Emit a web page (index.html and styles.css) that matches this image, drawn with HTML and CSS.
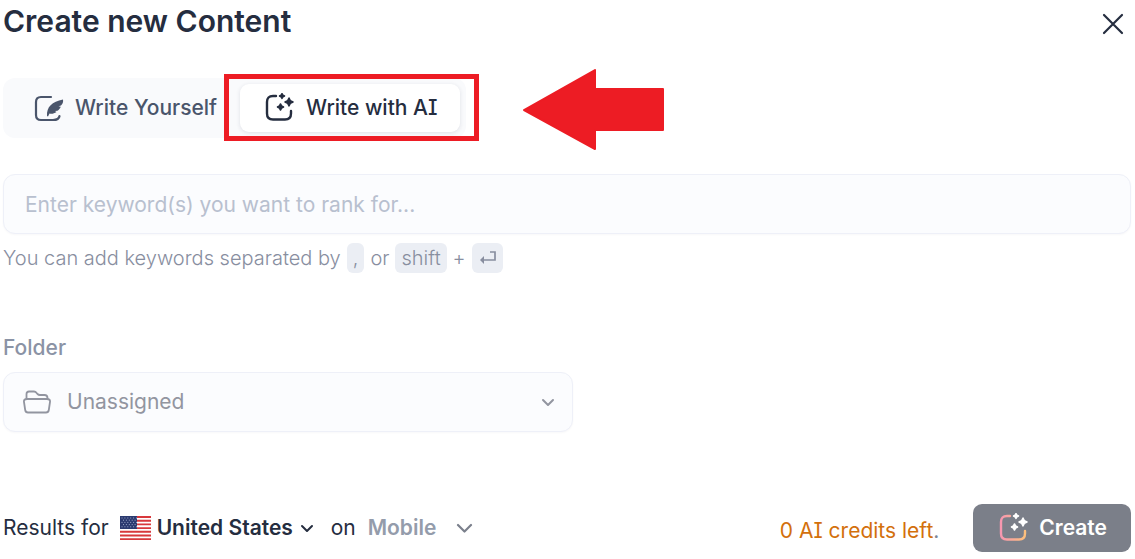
FILE: index.html
```html
<!DOCTYPE html>
<html lang="en">
<head>
    <meta charset="UTF-8">
    <meta name="viewport" content="width=device-width, initial-scale=1.0">
    <title>Create new Content</title>
    <link rel="stylesheet" href="styles.css">
</head>
<body>
    <main class="dialog">
        <header class="dialog-header">
            <h1>Create new Content</h1>
            <button type="button" class="close" aria-label="Close">
                <svg width="22" height="22" viewBox="0 0 22 22" fill="none" stroke="currentColor" stroke-width="2.200" stroke-linecap="round">
                    <path d="M2 2L20 20M20 2L2 20"/>
                </svg>
            </button>
        </header>

        <div class="tabs">
            <button type="button" class="tab">
                <svg width="30" height="30" viewBox="0 0 30 30" fill="none" stroke="currentColor" stroke-width="2.200" stroke-linecap="round">
                    <path d="M17 4H7Q2 4 2 9V22Q2 27 7 27H19Q25 27 25.500 23"/>
                    <path d="M13 23C12.500 14 18 8.500 29 6.500C29.500 9 28.500 11 27 12.500L24.500 13.200L26.800 13.800C26 15.500 25 16.800 23.500 17.800L21 18L22.500 19C20 20.800 17.500 21 15.500 20.500L14 23.500Z" fill="currentColor" stroke="none"/>
                </svg>
                Write Yourself
            </button>
            <button type="button" class="tab active">
                <svg width="30" height="30" viewBox="0 0 30 30" fill="none" stroke="currentColor" stroke-width="2.400" stroke-linecap="round">
                    <path d="M11 3H8Q2 3 2 9V20.500Q2 26.500 8 26.500H20Q26 26.500 26 20.500V18"/>
                    <path class="stars" d="M17 0.500L17.900 2.100L19.500 3L17.900 3.900L17 5.500L16.100 3.900L14.500 3L16.100 2.100ZM24 5L25.300 7.700L28 9L25.300 10.300L24 13L22.700 10.300L20 9L22.700 7.700ZM15.500 11L16.600 12.900L18.500 14L16.600 15.100L15.500 17L14.400 15.100L12.500 14L14.400 12.900Z"/>
                </svg>
                Write with AI
            </button>
            <div class="highlight"></div>
            <svg class="arrow" width="141" height="82" viewBox="0 0 141 82" fill="currentColor" stroke="currentColor" stroke-width="2" stroke-linejoin="round">
                <path d="M1 41L72 1V20H140V61H72V80Z"/>
            </svg>
        </div>

        <input type="text" class="field keyword" placeholder="Enter keyword(s) you want to rank for..." aria-label="Keywords">
        <p class="hint">
            You can add keywords separated by <kbd>,</kbd> or <kbd>shift</kbd> +
            <kbd class="enter">
                <svg width="17" height="14" viewBox="0 0 17 14" fill="none" stroke="currentColor" stroke-width="1.700">
                    <path d="M11 1H16V9H3"/>
                    <path d="M5 5L1 9L5 13Z" fill="currentColor" stroke="none"/>
                </svg>
            </kbd>
        </p>

        <label class="folder-label" for="folder">Folder</label>
        <div class="field folder">
            <svg width="28" height="24" viewBox="0 0 28 24" fill="none" stroke="currentColor" stroke-width="1.800" stroke-linejoin="round">
                <path d="M3.500 9V4Q3.500 1.500 6 1.500H11Q12.500 1.500 13.500 2.800L14.500 4Q15.500 5 17 5H21.500Q24.500 5 24.500 8V9"/>
                <path d="M4 9H24Q27.500 9 27 12L25.800 20Q25.400 22.500 23 22.500H5Q2.600 22.500 2.200 20L1 12Q0.500 9 4 9Z"/>
            </svg>
            <select id="folder">
                <option>Unassigned</option>
            </select>
            <svg class="chevron" width="14" height="10" viewBox="0 0 14 10" fill="none" stroke="currentColor" stroke-width="2" stroke-linecap="round" stroke-linejoin="round">
                <path d="M2 3L7 8L12 3"/>
            </svg>
        </div>

        <footer class="dialog-footer">
            <label for="country">Results for</label>
            <div class="country">
                <svg width="31" height="24" viewBox="0 0 31 24">
                    <rect width="31" height="24" fill="#fff"/>
                    <path d="M0 1H31M0 4.700H31M0 8.400H31M0 12.100H31M0 15.800H31M0 19.500H31M0 23.200H31" stroke="#d8383c" stroke-width="1.900"/>
                    <rect width="17" height="13" fill="#2b3a70"/>
                    <path d="M1.500 2H17M3 4.200H17M1.500 6.400H17M3 8.600H17M1.500 10.800H17" stroke="#a9b3d2" stroke-width="0.900" stroke-dasharray="1 1.900"/>
                </svg>
                <select id="country">
                    <option>United States</option>
                </select>
                <svg class="chevron" width="14" height="10" viewBox="0 0 14 10" fill="none" stroke="currentColor" stroke-width="2" stroke-linecap="round" stroke-linejoin="round">
                    <path d="M2 3L7 8L12 3"/>
                </svg>
            </div>
            <label for="device">on</label>
            <div class="device">
                <select id="device">
                    <option>Mobile</option>
                </select>
                <svg class="chevron" width="17" height="10" viewBox="0 0 17 10" fill="none" stroke="#7b808c" stroke-width="2.200" stroke-linecap="round" stroke-linejoin="round">
                    <path d="M2 2L8.500 8.500L15 2"/>
                </svg>
            </div>
            <p class="credits"><span>0 AI credits left</span>.</p>
            <button type="button" class="create">
                <svg width="30" height="30" viewBox="0 0 30 30" fill="none" stroke-width="2.400" stroke-linecap="round">
                    <defs>
                        <linearGradient id="glow" x1="0" y1="0" x2="1" y2="0">
                            <stop offset="0" stop-color="#f797b0"/>
                            <stop offset="1" stop-color="#fdc07c"/>
                        </linearGradient>
                    </defs>
                    <path stroke="url(#glow)" d="M11 3H8Q2 3 2 9V20.500Q2 26.500 8 26.500H20Q26 26.500 26 20.500V18"/>
                    <path class="stars" d="M17 0.500L17.900 2.100L19.500 3L17.900 3.900L17 5.500L16.100 3.900L14.500 3L16.100 2.100ZM24 5L25.300 7.700L28 9L25.300 10.300L24 13L22.700 10.300L20 9L22.700 7.700ZM15.500 11L16.600 12.900L18.500 14L16.600 15.100L15.500 17L14.400 15.100L12.500 14L14.400 12.900Z"/>
                </svg>
                Create
            </button>
        </footer>
    </main>
</body>
</html>
```
FILE: styles.css
```css
* {
    box-sizing: border-box;
}

body {
    margin: 0;
    background-color: #fff;
    color: #252d3f;
    font-family: Inter, "Liberation Sans", sans-serif;
    font-size: 21px;
    line-height: 30px;
    font-feature-settings: "cv08";
}

button,
input,
select {
    font: inherit;
    font-feature-settings: inherit;
    color: inherit;
}

button {
    border: none;
    cursor: pointer;
}

svg {
    flex-shrink: 0;
}

select {
    appearance: none;
    border: none;
    padding: 0;
    background: none;
}

.dialog {
    padding: 3px 4px 7px 3px;
}

.dialog-header {
    display: flex;
    justify-content: space-between;
    align-items: flex-start;
    height: 36px;
    margin-bottom: 39px;
}

h1 {
    margin: 0;
    font-size: 30px;
    font-weight: 600;
    line-height: 36px;
}

.close {
    display: flex;
    padding: 10px 7px;
    background: none;
}

.tabs {
    position: relative;
    display: flex;
    width: fit-content;
    padding: 6px;
    border-radius: 12px;
    background-color: #f9fafc;
}

.tab {
    display: flex;
    align-items: center;
    gap: 11px;
    height: 48px;
    padding: 0 23px 0 25px;
    border-radius: 9px;
    background: none;
    color: #4a556b;
    font-weight: 500;
    white-space: nowrap;
}

.tab.active {
    background-color: #fff;
    color: #252d3f;
    box-shadow: 0 1px 4px rgba(30, 40, 70, 0.12);
}

.stars {
    fill: currentColor;
    stroke: currentColor;
    stroke-width: 1.5;
    stroke-linejoin: round;
}

.highlight {
    position: absolute;
    top: -4px;
    right: -13px;
    width: 255px;
    height: 67px;
    border: 5px solid #ed1c24;
    pointer-events: none;
}

.arrow {
    position: absolute;
    top: -9px;
    left: 100%;
    margin-left: 57px;
    color: #ed1c24;
}

.field {
    width: 100%;
    height: 60px;
    border: 1px solid #eef0f8;
    border-radius: 12px;
    background-color: #fbfcfe;
    box-shadow: 0 1px 2px rgba(30, 40, 70, 0.03);
}

.keyword {
    display: block;
    margin-top: 36px;
    padding: 0 21px;
}

.keyword::placeholder {
    color: #b8c0cf;
    opacity: 1;
}

.hint {
    display: flex;
    align-items: center;
    gap: 6px;
    margin: 9px 0 60px;
    color: #888e9f;
    font-size: 20px;
    font-weight: 300;
}

kbd {
    height: 30px;
    padding: 0 6px;
    border-radius: 6px;
    background-color: #ebeef4;
    font: inherit;
}

.enter {
    display: flex;
    align-items: center;
    padding: 0 7px;
}

.folder-label {
    display: block;
    margin-bottom: 9px;
    color: #8b93a5;
    font-weight: 500;
}

.folder {
    display: flex;
    align-items: center;
    gap: 16px;
    max-width: 570px;
    padding: 0 17px 0 19px;
    color: #9295a0;
}

.folder select {
    flex: 1;
}

.dialog-footer {
    display: flex;
    align-items: center;
    height: 48px;
    margin-top: 72px;
    white-space: nowrap;
}

.country,
.device {
    display: flex;
    align-items: center;
    font-weight: 600;
}

.country {
    gap: 6px;
    margin: 0 17px 0 11px;
}

.device {
    gap: 19px;
    margin-left: 12px;
    color: #949cab;
}

.credits {
    margin: 0 34px 0 auto;
    padding-top: 6px;
    color: #7d8698;
}

.credits span {
    color: #d3700c;
}

.create {
    display: flex;
    align-items: center;
    gap: 10px;
    height: 48px;
    padding: 0 24px 0 26px;
    border-radius: 9px;
    background-color: #7b7f89;
    color: #fff;
    font-weight: 600;
}
```
